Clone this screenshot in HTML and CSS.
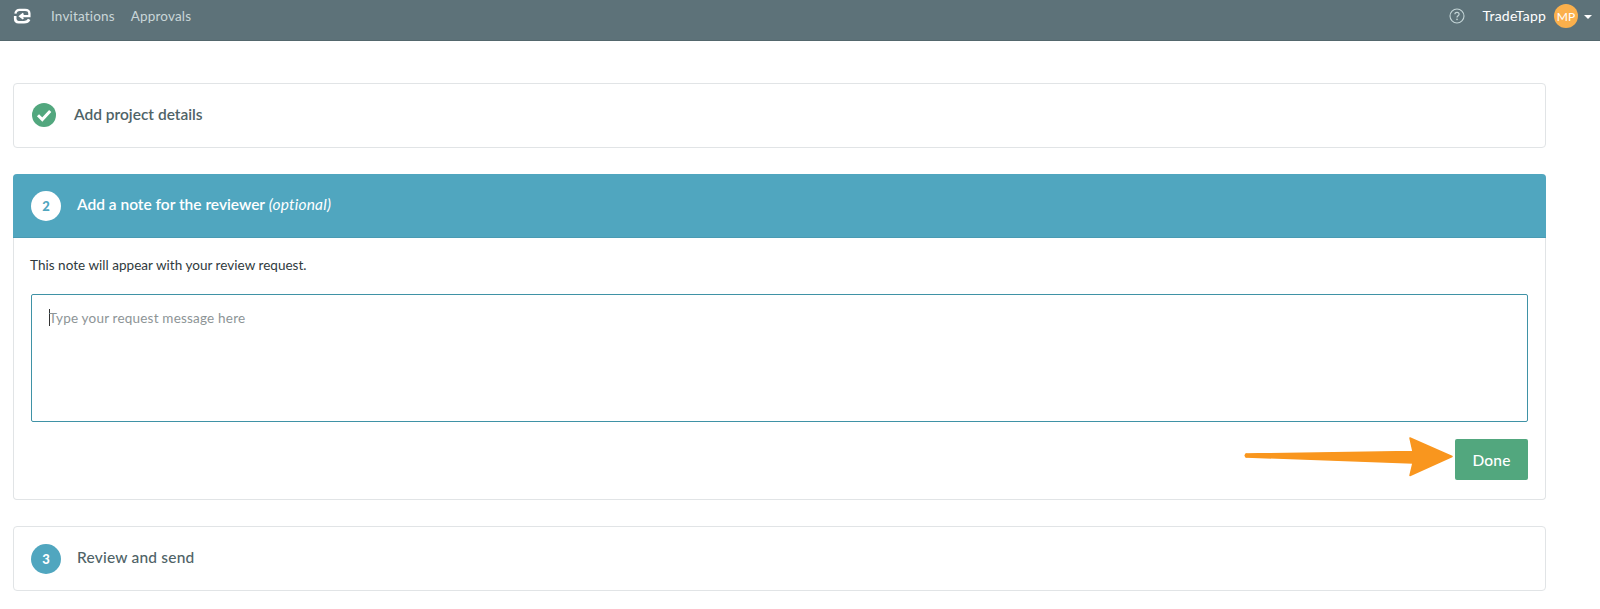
FILE: index.html
```html
<!DOCTYPE html>
<html lang="en">
<head>
<meta charset="utf-8">
<title>Request review</title>
<link rel="stylesheet" href="styles.css">
</head>
<body>
<header class="nav">
  <svg class="logo" viewBox="0 0 18 16" width="18" height="16"><path d="M2.4 5.6C2.8 3 4.4 1.8 6.6 1.8H12C15 1.8 16.4 3.4 16.4 5.4V8.2H8.2" fill="none" stroke="#fff" stroke-width="2.3"/><path d="M10.4 5.4L7 8.2L10.4 10.8" fill="none" stroke="#fff" stroke-width="2"/><path d="M2.2 8V10.8C2.2 13 3.4 14.2 5.6 14.2H11C13.6 14.2 15.4 13.2 16.2 11.4" fill="none" stroke="#fff" stroke-width="2.6"/></svg>
  <a class="nav-link">Invitations</a>
  <a class="nav-link">Approvals</a>
  <span class="spacer"></span>
  <svg class="help" viewBox="0 0 16 16" width="16" height="16"><circle cx="8" cy="8" r="7" fill="none" stroke="#c3d4d6" stroke-width="1.1"/><path d="M5.9 6.3C5.9 5 6.9 4.3 8 4.3S10.1 5 10.1 6.2C10.1 7.7 8 7.7 8 9.4" fill="none" stroke="#c3d4d6" stroke-width="1.2"/><circle cx="8" cy="11.4" r=".8" fill="#c3d4d6"/></svg>
  <span class="org">TradeTapp</span>
  <span class="avatar">MP</span>
  <span class="caret"></span>
</header>
<main class="page">
  <section class="card step">
    <svg class="check" viewBox="0 0 24 24" width="24" height="24"><circle cx="12" cy="12" r="12" fill="#52a77e"/><path d="M6 12.2L10.3 16.6L18.2 8" fill="none" stroke="#fff" stroke-width="3"/></svg>
    <h2 class="step-title done-title">Add project details</h2>
  </section>
  <section class="card active">
    <div class="active-head">
      <span class="badge badge-white">2</span>
      <h2 class="step-title head-title">Add a note for the reviewer <em>(optional)</em></h2>
    </div>
    <div class="active-body">
      <p class="hint">This note will appear with your review request.</p>
      <div class="note"><span class="cursor"></span><span class="placeholder">Type your request message here</span></div>
      <div class="actions"><button class="done">Done</button></div>
    </div>
  </section>
  <section class="card step">
    <span class="badge badge-blue">3</span>
    <h2 class="step-title">Review and send</h2>
  </section>
</main>
<svg class="arrow" viewBox="0 0 210 42" width="210" height="42"><path d="M2 17L169 14.5L166 1L208 19.5L166 38.5L169 26L2 20Z" fill="#f9961e" stroke="#f9961e" stroke-width="1.5" stroke-linejoin="round"/><circle cx="2.5" cy="18.5" r="2" fill="#f9961e"/></svg>
</body>
</html>
```
FILE: styles.css
```css
* { box-sizing: border-box; }
html, body { margin: 0; height: 609px; overflow: hidden; }
body { background: #fff; font-family: Lato, "Open Sans", sans-serif; color: #4f6367; position: relative; }
.nav { height: 41px; background: #5d7279; border-bottom: 1px solid #53676d; display: flex; align-items: center; padding: 0 8px 9px 12px; font-size: 13.5px; }
.logo { margin: 1px 0 0 1px; flex: none; }
.nav-link { color: #c9d6d8; margin-left: 16px; letter-spacing: .17px; }
.logo + .nav-link { margin-left: 20px; }
.spacer { flex: 1; }
.help { flex: none; }
.org { color: #fff; margin-left: 18px; font-size: 14px; letter-spacing: .2px; }
.avatar { width: 24px; height: 24px; border-radius: 50%; background: #fbb04c; color: #fff; font-size: 12px; display: flex; align-items: center; justify-content: center; margin-left: 8px; margin-top: 1px; }
.caret { width: 0; height: 0; border: 4.5px solid transparent; border-top: 4.5px solid #fff; border-bottom: 0; margin-left: 6px; margin-top: 2px; }
.page { width: 1533px; margin-left: 13px; padding-top: 42px; display: flex; flex-direction: column; gap: 26px; }
.card { border: 1px solid #e1e4e6; border-radius: 4px; background: #fff; }
.step { height: 65px; display: flex; align-items: center; padding-left: 17px; }
.step-title { margin: 0 0 3px 16px; font-size: 15.5px; font-weight: 500; color: #4f6367; letter-spacing: .2px; }
.check { margin: 0 0 1px 1px; flex: none; }
.done-title { margin-left: 18px; font-weight: 600; letter-spacing: 0; }
.badge { width: 30px; height: 30px; border-radius: 50%; display: flex; align-items: center; justify-content: center; font-size: 13px; font-weight: 900; flex: none; }
.badge-white { background: #fff; color: #50a6bf; }
.badge-blue { background: #50a6bf; color: #fff; }
.active { height: 326px; border-top: 0; }
.active-head { height: 64px; background: #50a6bf; margin: 0 -1px; border-radius: 4px 4px 0 0; display: flex; align-items: center; padding-left: 18px; border-bottom: 1px solid #4a9bb3; }
.head-title { color: #fff; font-weight: 600; letter-spacing: 0; }
.head-title em { font-weight: 400; letter-spacing: .2px; }
.active-body { padding: 18px 17px 0 17px; }
.hint { margin: 0 0 0 -1px; font-size: 13.5px; line-height: 18px; color: #2f3a3d; letter-spacing: .03px; }
.note { height: 128px; margin-top: 20px; border: 1px solid #3f92a6; border-radius: 2px; padding: 14px 17px; display: flex; align-items: flex-start; font-size: 13.5px; line-height: 18px; letter-spacing: .2px; }
.cursor { width: 1px; height: 17px; background: #333; flex: none; margin-right: -1px; }
.placeholder { color: #8d9496; }
.actions { display: flex; justify-content: flex-end; margin-top: 17px; }
.done { width: 73px; height: 41px; border: 0; border-radius: 2px; background: #52a77e; color: #fff; font: 500 15.5px Lato, sans-serif; letter-spacing: .2px; }
.arrow { position: absolute; left: 1244px; top: 437px; }
```
